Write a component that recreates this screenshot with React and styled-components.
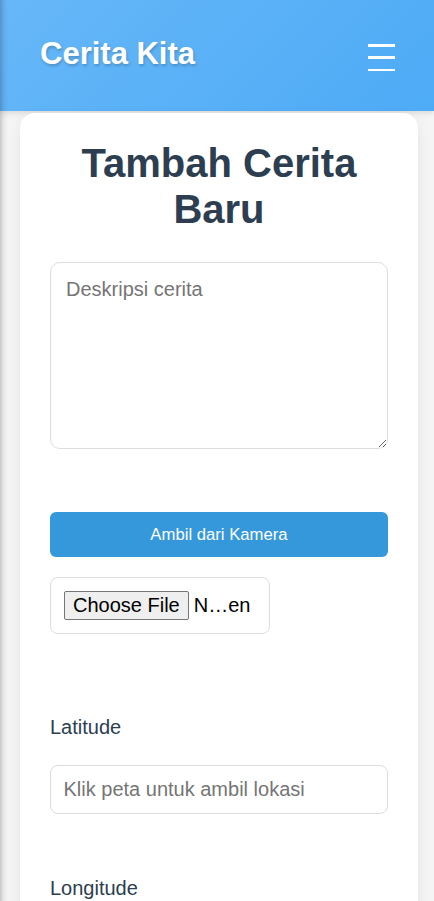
import React from "react";
import styled, { createGlobalStyle } from "styled-components";

const Global = createGlobalStyle`
  html, body { margin: 0; padding: 0; }
  body {
    background: #f5f5f5;
    font-family: "Liberation Sans", Arial, sans-serif;
    color: #2c3e50;
  }
  body::before {
    content: "";
    position: fixed;
    left: 0; top: 0; bottom: 0;
    width: 8px;
    background: linear-gradient(to right, rgba(0,0,0,0.18), rgba(0,0,0,0.05) 50%, rgba(0,0,0,0));
    pointer-events: none;
    z-index: 10;
  }
`;

const Header = styled.header`
  height: 111px;
  box-sizing: border-box;
  padding: 0 39px 0 40px;
  display: flex;
  align-items: center;
  justify-content: space-between;
  background: linear-gradient(135deg, #66b7f8 0%, #4eabf6 100%);
  box-shadow: 0 2px 6px rgba(0, 0, 0, 0.12);
`;

const Brand = styled.h1`
  margin: 0 0 4px 0;
  font-size: 31px;
  font-weight: 700;
  color: #fff;
  text-shadow: 1px 2px 3px rgba(0, 0, 0, 0.2);
`;

const MenuButton = styled.button`
  background: none;
  border: none;
  padding: 0;
  width: 27px;
  height: 27px;
  display: flex;
  flex-direction: column;
  justify-content: space-between;
  margin-top: 4px;
  cursor: pointer;
`;

const MenuLine = styled.span`
  display: block;
  height: 2.5px;
  background: #fff;
`;

const Main = styled.main`
  padding: 2px 0 40px 20px;
`;

const Card = styled.section`
  width: 398px;
  box-sizing: border-box;
  background: #fff;
  border-radius: 15px;
  padding: 27px 30px 40px;
  box-shadow: 0 4px 14px rgba(0, 0, 0, 0.08);
`;

const Title = styled.h2`
  margin: 0;
  text-align: center;
  font-size: 40px;
  line-height: 46px;
  font-weight: 700;
  color: #2c3e50;
`;

const Form = styled.form`
  display: flex;
  flex-direction: column;
  margin-top: 30px;
`;

const TextArea = styled.textarea`
  box-sizing: border-box;
  width: 100%;
  height: 187px;
  padding: 15px;
  border: 1px solid #ddd;
  border-radius: 10px;
  font-family: "Liberation Sans", Arial, sans-serif;
  font-size: 20px;
  line-height: 23px;
  color: #333;
  outline: none;
  &::placeholder { color: #757575; }
`;

const PrimaryButton = styled.button`
  margin-top: 63px;
  height: 45px;
  border: none;
  border-radius: 6px;
  background: #3498db;
  color: #fff;
  font-family: "Liberation Sans", Arial, sans-serif;
  font-size: 16.7px;
  cursor: pointer;
`;

const FileBox = styled.label`
  margin-top: 20px;
  align-self: flex-start;
  width: 220px;
  box-sizing: border-box;
  padding: 13px 13px;
  border: 1px solid #ddd;
  border-radius: 8px;
  display: flex;
  align-items: center;
  gap: 5px;
  font-size: 20px;
  color: #000;
`;

const FileButton = styled.span`
  box-sizing: border-box;
  height: 29px;
  padding: 2px 8px;
  border: 1px solid #767676;
  border-radius: 2px;
  background: #efefef;
  line-height: 23px;
  white-space: nowrap;
`;

const FileName = styled.span`
  line-height: 23px;
`;

const Field = styled.div`
  display: flex;
  flex-direction: column;
  gap: 26px;
  margin-top: ${(p) => p.$top}px;
`;

const Label = styled.label`
  font-size: 20px;
  line-height: 23px;
  color: #2c3e50;
`;

const Input = styled.input`
  box-sizing: border-box;
  width: 100%;
  height: 49px;
  padding: 12px 12.5px;
  border: 1px solid #ddd;
  border-radius: 8px;
  font-family: "Liberation Sans", Arial, sans-serif;
  font-size: 20px;
  color: #333;
  outline: none;
  &::placeholder { color: #757575; }
`;

export default function App() {
  return (
    <>
      <Global />
      <Header>
        <Brand>Cerita Kita</Brand>
        <MenuButton aria-label="Menu">
          <MenuLine />
          <MenuLine />
          <MenuLine />
        </MenuButton>
      </Header>
      <Main>
        <Card>
          <Title>Tambah Cerita Baru</Title>
          <Form onSubmit={(e) => e.preventDefault()}>
            <TextArea placeholder="Deskripsi cerita" />
            <PrimaryButton type="button">Ambil dari Kamera</PrimaryButton>
            <FileBox>
              <FileButton>Choose File</FileButton>
              <FileName>N…en</FileName>
            </FileBox>
            <Field $top={82}>
              <Label htmlFor="lat">Latitude</Label>
              <Input id="lat" placeholder="Klik peta untuk ambil lokasi" readOnly />
            </Field>
            <Field $top={63}>
              <Label htmlFor="lon">Longitude</Label>
              <Input id="lon" placeholder="Klik peta untuk ambil lokasi" readOnly />
            </Field>
          </Form>
        </Card>
      </Main>
    </>
  );
}
